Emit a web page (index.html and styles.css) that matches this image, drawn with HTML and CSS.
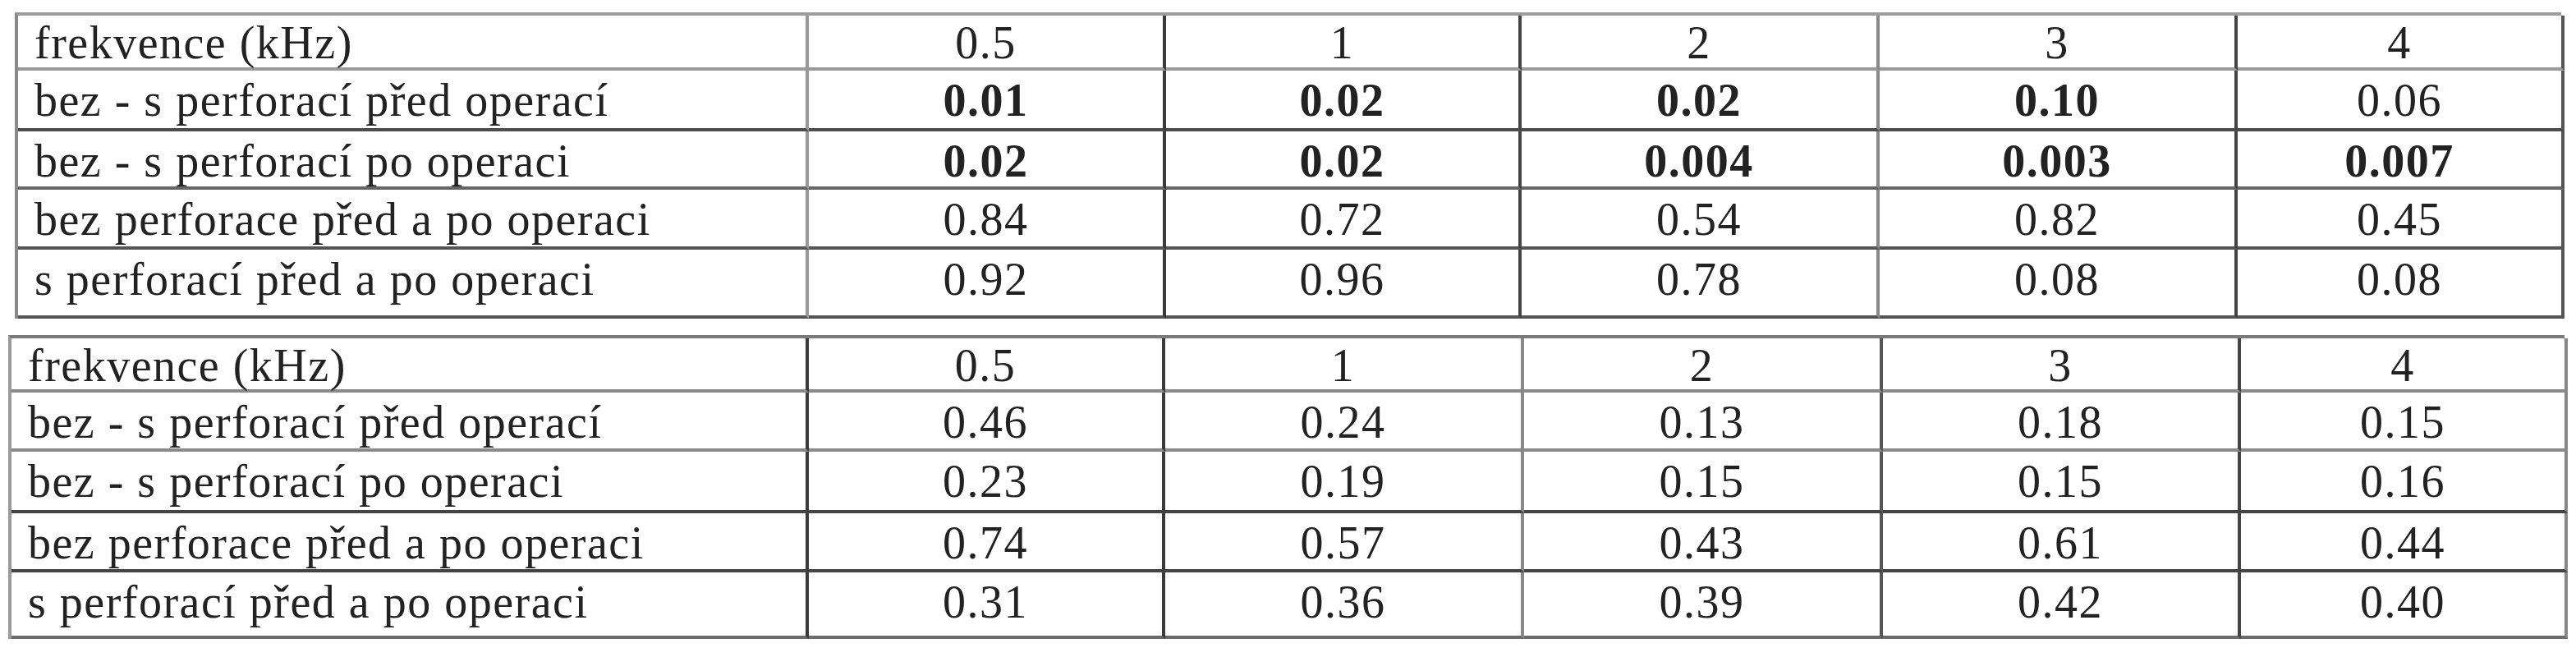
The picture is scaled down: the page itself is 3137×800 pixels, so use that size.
FILE: index.html
```html
<!DOCTYPE html>
<html lang="cs">
<head>
<meta charset="utf-8">
<title>Tabulky</title>
<link rel="stylesheet" href="styles.css">
</head>
<body>
<div class="page">
  <div class="grid t1">
    <div class="row r0"><div class="cell lab">frekvence (kHz)</div><div class="cell">0.5</div><div class="cell">1</div><div class="cell">2</div><div class="cell">3</div><div class="cell">4</div></div>
    <div class="row r1"><div class="cell lab">bez - s perforací před operací</div><div class="cell b">0.01</div><div class="cell b">0.02</div><div class="cell b">0.02</div><div class="cell b">0.10</div><div class="cell">0.06</div></div>
    <div class="row r2"><div class="cell lab">bez - s perforací po operaci</div><div class="cell b">0.02</div><div class="cell b">0.02</div><div class="cell b">0.004</div><div class="cell b">0.003</div><div class="cell b">0.007</div></div>
    <div class="row r3"><div class="cell lab">bez perforace před a po operaci</div><div class="cell">0.84</div><div class="cell">0.72</div><div class="cell">0.54</div><div class="cell">0.82</div><div class="cell">0.45</div></div>
    <div class="row r4"><div class="cell lab">s perforací před a po operaci</div><div class="cell">0.92</div><div class="cell">0.96</div><div class="cell">0.78</div><div class="cell">0.08</div><div class="cell">0.08</div></div>
  </div>
  <div class="grid t2">
    <div class="row r0"><div class="cell lab">frekvence (kHz)</div><div class="cell">0.5</div><div class="cell">1</div><div class="cell">2</div><div class="cell">3</div><div class="cell">4</div></div>
    <div class="row r1"><div class="cell lab">bez - s perforací před operací</div><div class="cell">0.46</div><div class="cell">0.24</div><div class="cell">0.13</div><div class="cell">0.18</div><div class="cell">0.15</div></div>
    <div class="row r2"><div class="cell lab">bez - s perforací po operaci</div><div class="cell">0.23</div><div class="cell">0.19</div><div class="cell">0.15</div><div class="cell">0.15</div><div class="cell">0.16</div></div>
    <div class="row r3"><div class="cell lab">bez perforace před a po operaci</div><div class="cell">0.74</div><div class="cell">0.57</div><div class="cell">0.43</div><div class="cell">0.61</div><div class="cell">0.44</div></div>
    <div class="row r4"><div class="cell lab">s perforací před a po operaci</div><div class="cell">0.31</div><div class="cell">0.36</div><div class="cell">0.39</div><div class="cell">0.42</div><div class="cell">0.40</div></div>
  </div>
</div>
</body>
</html>
```
FILE: styles.css
```css
html, body {
  margin: 0;
  padding: 0;
  background: #ffffff;
}

.page {
  padding-top: 15px;
  font-family: "Liberation Serif", "Times New Roman", serif;
  font-size: 56px;
  letter-spacing: 1.5px;
  line-height: 60px;
  color: #222222;
}

.grid {
  display: grid;
  box-sizing: border-box;
  border-top: 4px solid #9a9a9a;
  border-left: 4px solid #8a8a8a;
}

.row {
  display: contents;
}

.cell {
  box-sizing: border-box;
  border-right: 4px solid #555555;
  border-bottom: 4px solid #555555;
  padding-top: 6px;
  text-align: center;
  white-space: nowrap;
}

.cell.lab {
  text-align: left;
  padding-left: 20px;
}

.cell.b {
  font-weight: bold;
}

.r0 .cell {
  padding-top: 3px;
}

/* Table 1 */
.t1 {
  margin-left: 18px;
  width: 3101px;
  grid-template-columns: 963px 435px 433px 436px 436px 398px;
  grid-template-rows: 67px 74px 71px 73px 84px;
  border-top-color: #9d9d9d;
  border-left-color: #8a8a8a;
}
.t1 .cell:nth-child(1) { border-right-color: #999999; }
.t1 .cell:nth-child(2) { border-right-color: #3a3a3a; }
.t1 .cell:nth-child(3) { border-right-color: #444444; }
.t1 .cell:nth-child(4) { border-right-color: #888888; }
.t1 .cell:nth-child(5) { border-right-color: #444444; }
.t1 .cell:nth-child(6) { border-right-color: #555555; }
.t1 .r0 .cell { border-bottom-color: #9a9a9a; }
.t1 .r1 .cell { border-bottom-color: #4c4c4c; }
.t1 .r2 .cell { border-bottom-color: #666666; }
.t1 .r3 .cell { border-bottom-color: #555555; }
.t1 .r4 .cell { border-bottom-color: #555555; }

/* Table 2 */
.t2 {
  margin-top: 20px;
  margin-left: 10px;
  width: 3113px;
  grid-template-columns: 971px 434px 437px 437px 436px 398px;
  grid-template-rows: 66px 72px 75px 72px 81px;
  border-top-color: #7a7a7a;
  border-left-color: #9a9a9a;
}
.t2 .cell:nth-child(1) { border-right-color: #3a3a3a; }
.t2 .cell:nth-child(2) { border-right-color: #3a3a3a; }
.t2 .cell:nth-child(3) { border-right-color: #888888; }
.t2 .cell:nth-child(4) { border-right-color: #555555; }
.t2 .cell:nth-child(5) { border-right-color: #444444; }
.t2 .cell:nth-child(6) { border-right-color: #888888; }
.t2 .r0 .cell { border-bottom-color: #8a8a8a; }
.t2 .r1 .cell { border-bottom-color: #8a8a8a; }
.t2 .r2 .cell { border-bottom-color: #444444; }
.t2 .r3 .cell { border-bottom-color: #444444; }
.t2 .r4 .cell { border-bottom-color: #6a6a6a; }
```
